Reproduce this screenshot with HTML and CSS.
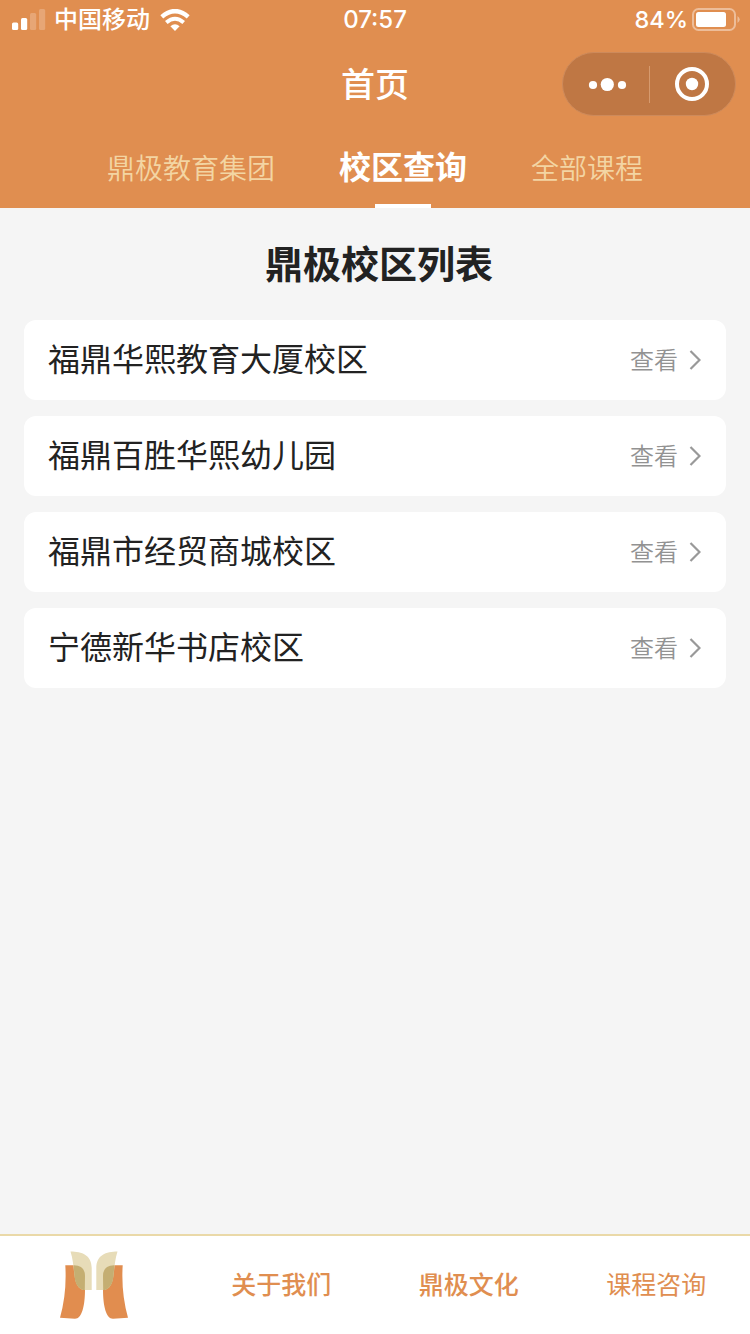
FILE: index.html
```html
<!DOCTYPE html>
<html lang="zh-CN">
<head>
  <meta charset="UTF-8" />
  <meta name="viewport" content="width=device-width, initial-scale=1.0"/>
  <title>首页</title>
  <link rel="stylesheet" href="styles.css">
</head>
<body>

  <header class="header">
    <!-- Status bar -->
    <div class="status">
      <div class="status-left">
        <svg class="signal" width="34" height="22" viewBox="0 0 34 22" fill="#fff">
          <rect x="0" y="13.5" width="6.2" height="7.5" rx="1.5"/>
          <rect x="9" y="9" width="6.2" height="12" rx="1.5"/>
          <rect x="18" y="4" width="6.2" height="17" rx="1.5" opacity="0.22"/>
          <rect x="27" y="0" width="6.2" height="21" rx="1.5" opacity="0.22"/>
        </svg>
        <span class="carrier">中国移动</span>
        <svg class="wifi" width="30" height="22" viewBox="0 0 30 22">
          <path d="M1.8 7.8 Q15 -3.6 28.2 7.8" fill="none" stroke="#fff" stroke-width="4.4"/>
          <path d="M6.3 13.4 Q15 6 23.7 13.4" fill="none" stroke="#fff" stroke-width="4"/>
          <path d="M10.4 17.3 Q15 13.4 19.6 17.3 L15 22 Z" fill="#fff"/>
        </svg>
      </div>
      <span class="time">07:57</span>
      <div class="status-right">
        <span class="percent">84%</span>
        <svg class="battery" width="49" height="24" viewBox="0 0 49 24">
          <rect x="1" y="1" width="42" height="21" rx="5.5" fill="none" stroke="#fff" stroke-opacity="0.42" stroke-width="2"/>
          <rect x="4" y="4" width="30" height="15" rx="2.5" fill="#fff"/>
          <path d="M45.5 8 Q50 11.5 45.5 15 Z" fill="#fff" fill-opacity="0.42"/>
        </svg>
      </div>
    </div>

    <!-- Title and capsule button -->
    <div class="nav">
      <h1 class="nav-title">首页</h1>
      <div class="capsule">
        <svg class="more" width="86" height="62" viewBox="0 0 86 62" fill="#fff">
          <circle cx="30" cy="32" r="4.1"/>
          <circle cx="44.3" cy="31.5" r="6.6"/>
          <circle cx="59" cy="32" r="4.1"/>
        </svg>
        <span class="capsule-line"></span>
        <svg class="close" width="85" height="62" viewBox="0 0 85 62">
          <circle cx="42" cy="31" r="15" fill="none" stroke="#fff" stroke-width="4"/>
          <circle cx="42" cy="31" r="6.2" fill="#fff"/>
        </svg>
      </div>
    </div>

    <nav class="tabs">
      <a class="tab">鼎极教育集团</a>
      <a class="tab active">校区查询</a>
      <a class="tab">全部课程</a>
    </nav>
  </header>

  <main class="content">
    <h2 class="list-title">鼎极校区列表</h2>
    <ul class="list">
      <li class="card">
        <span class="name">福鼎华熙教育大厦校区</span>
        <span class="view">查看</span>
        <svg class="arrow" width="12" height="20" viewBox="0 0 12 20"><path d="M1.5 1 L10.5 10 L1.5 19"/></svg>
      </li>
      <li class="card">
        <span class="name">福鼎百胜华熙幼儿园</span>
        <span class="view">查看</span>
        <svg class="arrow" width="12" height="20" viewBox="0 0 12 20"><path d="M1.5 1 L10.5 10 L1.5 19"/></svg>
      </li>
      <li class="card">
        <span class="name">福鼎市经贸商城校区</span>
        <span class="view">查看</span>
        <svg class="arrow" width="12" height="20" viewBox="0 0 12 20"><path d="M1.5 1 L10.5 10 L1.5 19"/></svg>
      </li>
      <li class="card">
        <span class="name">宁德新华书店校区</span>
        <span class="view">查看</span>
        <svg class="arrow" width="12" height="20" viewBox="0 0 12 20"><path d="M1.5 1 L10.5 10 L1.5 19"/></svg>
      </li>
    </ul>
  </main>

  <!-- Bottom bar -->
  <footer class="bottom">
    <a class="bottom-item">
      <svg class="logo" width="68" height="68" viewBox="0 0 68 68">
        <g id="half">
          <path d="M5.3 14.3 L14 14.3 Q25 14.5 25 25 V38 C25 55 22 67.5 15 67.8 L0 66.7 Q7 42 5.3 14.3 Z" fill="#e18d4f"/>
          <path d="M10.5 0.5 C22 0.5 31.7 4 31.7 17 V39 H23 C11.5 35 16 17 10.5 0.5 Z" fill="#e7dcb8"/>
          <path d="M13.6 14.3 H14 Q25 14.5 25 25 L24.8 39 H23 C13.5 35.5 14.8 25 13.6 14.3 Z" fill="#c4ae72"/>
        </g>
        <use href="#half" transform="translate(68 0) scale(-1 1)"/>
      </svg>
    </a>
    <a class="bottom-item"><span>关于我们</span></a>
    <a class="bottom-item"><span>鼎极文化</span></a>
    <a class="bottom-item light"><span>课程咨询</span></a>
  </footer>

</body>
</html>
```
FILE: styles.css
```css
* {
  box-sizing: border-box;
}
body {
  margin: 0;
  height: 100vh;
  display: flex;
  flex-direction: column;
  background: #f5f5f5;
  color: #222;
  font-family: Inter, "Noto Sans CJK SC", sans-serif;
  overflow: hidden;
}
svg {
  display: block;
  flex: none;
}
/* Header */
.header {
  height: 208px;
  background: #e08e50;
  color: #fff;
}
.status {
  height: 40px;
  padding: 0 9px 0 12px;
  display: grid;
  grid-template-columns: 1fr auto 1fr;
  align-items: center;
  font-size: 24px;
  line-height: 40px;
}
.status-left,
.status-right {
  display: flex;
  align-items: center;
}
.status-right {
  justify-content: flex-end;
}
.carrier {
  margin: 0 10px 0 8px;
  font-weight: 500;
}
.time,
.percent {
  font-weight: 500;
}
.time {
  margin-right: 3px;
}
.percent {
  margin-right: 4px;
  font-size: 23.5px;
}
/* Nav */
.nav {
  height: 88px;
  padding: 0 14px;
  display: grid;
  grid-template-columns: 1fr auto 1fr;
  align-items: center;
}
.nav-title {
  grid-column: 2;
  margin: 0;
  padding-top: 2px;
  font-size: 34px;
  font-weight: 500;
  line-height: 86px;
}
.capsule {
  justify-self: end;
  display: flex;
  align-items: center;
  width: 174px;
  height: 64px;
  border: 1px solid #cd8a5b;
  border-radius: 32px;
  background: #bf7744;
}
.capsule-line {
  width: 1px;
  height: 37px;
  background: #d69a6e;
}
/* Tabs */
.tabs {
  height: 80px;
  display: flex;
  justify-content: center;
  gap: 64px;
}
.tab {
  font-size: 28px;
  font-weight: 350;
  line-height: 82px;
  color: #f3d5a3;
}
.tab.active {
  position: relative;
  font-size: 32px;
  font-weight: 700;
  line-height: 80px;
  color: #fff;
}
.tab.active::after {
  content: "";
  position: absolute;
  left: 36px;
  bottom: 0;
  width: 56px;
  height: 4px;
  background: #fff;
}
/* Campus list */
.content {
  flex: 1;
  padding: 0 24px;
}
.list-title {
  margin: 0;
  padding-left: 8px;
  font-size: 38px;
  font-weight: 700;
  line-height: 112px;
  text-align: center;
}
.list {
  margin: 0;
  padding: 0;
  list-style: none;
  display: flex;
  flex-direction: column;
  gap: 16px;
}
.card {
  height: 80px;
  padding: 0 25px 0 24px;
  display: flex;
  align-items: center;
  border-radius: 12px;
  background: #fff;
}
.name {
  flex: 1;
  font-size: 32px;
  line-height: 80px;
}
.view {
  margin-right: 11px;
  padding-bottom: 4px;
  font-size: 24px;
  font-weight: 350;
  color: #929292;
}
.arrow path {
  fill: none;
  stroke: #999;
  stroke-width: 2.2;
}
/* Bottom bar */
.bottom {
  height: 100px;
  display: grid;
  grid-template-columns: repeat(4, 1fr);
  border-top: 2px solid #ead9a8;
  background: #fff;
}
.bottom-item {
  display: flex;
  align-items: center;
  justify-content: center;
  font-size: 25px;
  font-weight: 500;
  color: #e08e50;
}
.bottom-item span {
  padding-bottom: 4px;
}
.bottom-item.light {
  font-weight: 400;
}
```
